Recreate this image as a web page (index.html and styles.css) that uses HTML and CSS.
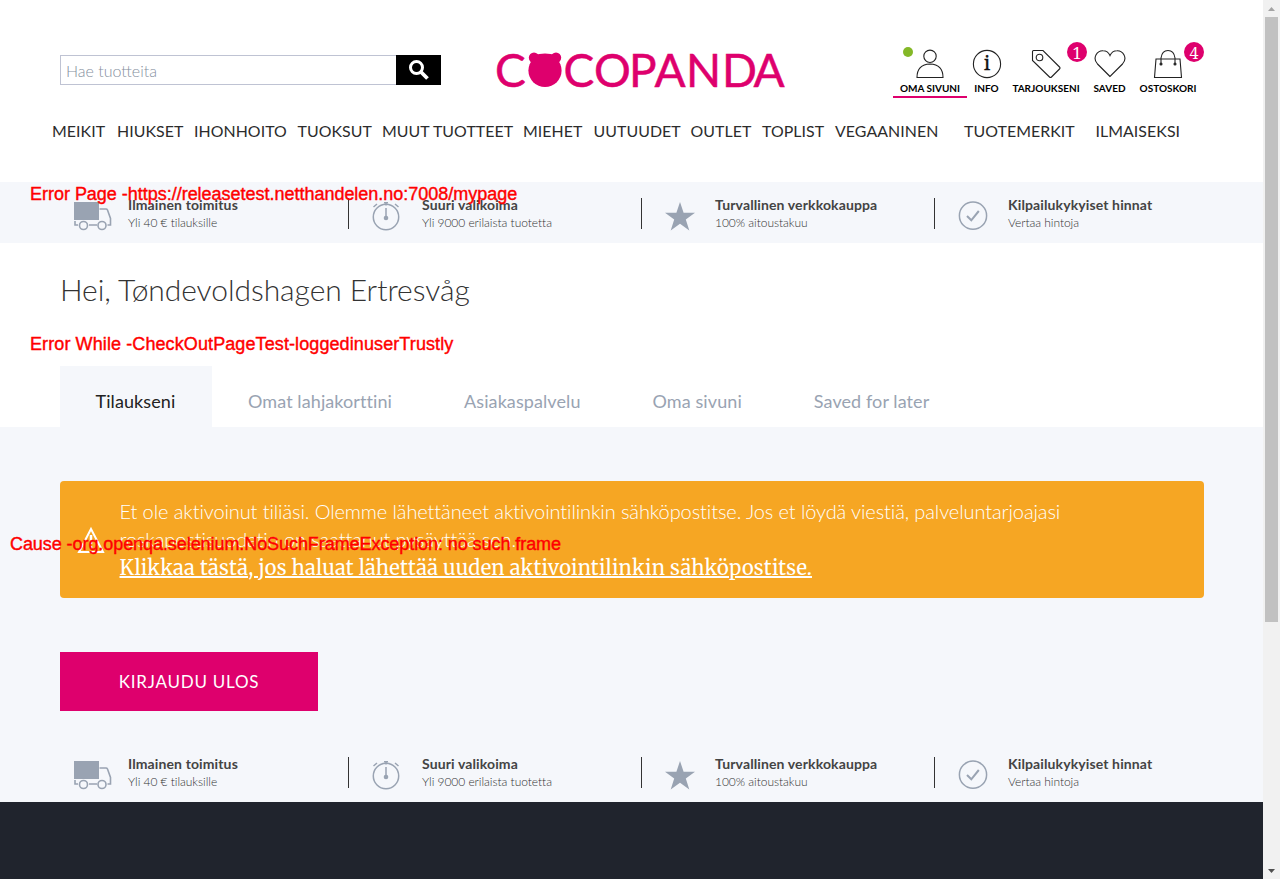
FILE: index.html
```html
<!DOCTYPE html>
<html lang="fi">
<head>
<meta charset="utf-8">
<title>Cocopanda</title>
<link rel="stylesheet" href="styles.css">
</head>
<body>
<svg class="sprite" width="0" height="0">
  <symbol id="truck" viewBox="0 0 38 30">
    <path fill="#99a3b2" d="M0 1h25v18H0z"/>
    <g fill="none" stroke="#99a3b2" stroke-width="1.6">
      <path d="M25.500 8h6.500q1 0 1.500 1l3 8.500v6.500h-3M15 24h8M4 24H1v-4"/>
      <circle cx="9.500" cy="24.500" r="4"/><circle cx="28" cy="24.500" r="4"/>
    </g>
  </symbol>
  <symbol id="clock" viewBox="0 0 28 30">
    <g fill="none" stroke="#99a3b2" stroke-width="1.5">
      <circle cx="14" cy="16" r="12.700"/><path d="M14 7v9M12 1.800h4M14 1.500v3M1.500 6l3.500-3M26.500 6l-3.500-3"/>
    </g>
    <circle cx="14" cy="17" r="2.300" fill="#99a3b2"/>
  </symbol>
  <symbol id="star" viewBox="0 0 30 30"><path fill="#99a3b2" d="M15 1l3.600 10.800H30l-9.200 6.700L24.300 29.500 15 22.700l-9.300 6.800 3.500-11L0 11.800h11.400z"/></symbol>
  <symbol id="check" viewBox="0 0 30 30"><circle cx="15" cy="14.700" r="13.600" fill="none" stroke="#99a3b2" stroke-width="1.500"/><path d="M9 15l4.300 4.300 7.500-9.300" fill="none" stroke="#99a3b2" stroke-width="2"/></symbol>
</svg>
<div class="window">
  <div class="page">
    <header class="header">
      <div class="topbar">
        <form class="search">
          <input class="search-input" placeholder="Hae tuotteita">
          <button class="search-button" type="button" aria-label="Hae"><svg width="22" height="22" viewBox="0 0 22 22" fill="none" stroke="#fff"><circle cx="8.500" cy="8.500" r="6" stroke-width="3"/><path d="M13 13l6.500 6.500" stroke-width="3.800"/></svg></button>
        </form>
        <svg class="logo" width="290" height="40" viewBox="0 0 290 40">
          <text class="logo-text" y="35.700" x="-1 67.500 98 133 158.500 190 226 257.500">CCOPANDA</text>
          <g fill="#de006d"><ellipse cx="49" cy="19.500" rx="16.600" ry="16.500"/><circle cx="38" cy="6.800" r="5.200"/><circle cx="60" cy="6.800" r="5.200"/><path d="M38 4q11-3 22 0l4 12H34z"/></g>
        </svg>
        <div class="shortcuts">
          <a class="shortcut shortcut-active"><svg width="30" height="30" viewBox="0 0 30 30"><circle cx="15" cy="7.300" r="6.200"/><path d="M2 28.500q0-13 13-13.500 13 .5 13 13.500z"/></svg><span>OMA SIVUNI</span><i class="online"></i></a>
          <a class="shortcut s-info"><svg width="30" height="30" viewBox="0 0 30 30"><circle cx="15" cy="15" r="13.600"/><text class="info-glyph" x="15" y="21" text-anchor="middle">i</text></svg><span>INFO</span></a>
          <a class="shortcut s-offers"><svg width="30" height="30" viewBox="0 0 30 30"><path d="M1.500 2.500q0-1 1-1h9.500l16.500 16.500q1 1 0 2l-8 8q-1 1-2 0L1.500 11.500z"/><circle cx="8.500" cy="8.500" r="3.300"/></svg><span>TARJOUKSENI</span><b class="badge">1</b></a>
          <a class="shortcut s-saved"><svg width="32" height="30" viewBox="0 0 32 30"><path d="M16 27.500L3.500 15C-2 9 3 1.500 9 1.700c4 0 6 2.500 7 4.800 1-2.300 3-4.800 7-4.800 6-.2 11 7.300 5.500 13.300z"/></svg><span>SAVED</span></a>
          <a class="shortcut s-cart"><svg width="30" height="30" viewBox="0 0 30 30"><path d="M3 10h24l1.500 18.500h-27zM8 14V9q1-7.500 7-7.500T22 9v5"/><circle class="solid" cx="8" cy="15" r="1"/><circle class="solid" cx="22" cy="15" r="1"/></svg><span>OSTOSKORI</span><b class="badge">4</b></a>
        </div>
      </div>
      <nav class="nav"><a>MEIKIT</a><a>HIUKSET</a><a>IHONHOITO</a><a>TUOKSUT</a><a>MUUT TUOTTEET</a><a>MIEHET</a><a>UUTUUDET</a><a>OUTLET</a><a>TOPLIST</a><a>VEGAANINEN</a><a>TUOTEMERKIT</a><a>ILMAISEKSI</a></nav>
    </header>
    <section class="usp">
      <div class="usp-item"><svg width="38" height="30"><use href="#truck"/></svg><p><strong>Ilmainen toimitus</strong><span>Yli 40 € tilauksille</span></p></div>
      <div class="usp-item"><svg width="28" height="30"><use href="#clock"/></svg><p><strong>Suuri valikoima</strong><span>Yli 9000 erilaista tuotetta</span></p></div>
      <div class="usp-item"><svg width="30" height="30"><use href="#star"/></svg><p><strong>Turvallinen verkkokauppa</strong><span>100% aitoustakuu</span></p></div>
      <div class="usp-item"><svg width="30" height="30"><use href="#check"/></svg><p><strong>Kilpailukykyiset hinnat</strong><span>Vertaa hintoja</span></p></div>
    </section>
    <h1 class="greeting">Hei, Tøndevoldshagen Ertresvåg</h1>
    <div class="tabs"><a class="tab tab-active">Tilaukseni</a><a class="tab">Omat lahjakorttini</a><a class="tab">Asiakaspalvelu</a><a class="tab">Oma sivuni</a><a class="tab">Saved for later</a></div>
    <main class="panel">
      <div class="alert">
        <svg width="28" height="28" viewBox="0 0 28 28"><path d="M14 3L26 26H2z" fill="none" stroke="#fff" stroke-width="2"/><path d="M14 9v9M14 20v3" stroke="#fff" stroke-width="2.500"/></svg>
        <div class="alert-text"><span>Et ole aktivoinut tiliäsi. Olemme lähettäneet aktivointilinkin sähköpostitse. Jos et löydä viestiä, palveluntarjoajasi</span><br><span>roskapostisuodatin on saattanut pysäyttää sen.</span><br><a class="alert-link">Klikkaa tästä, jos haluat lähettää uuden aktivointilinkin sähköpostitse.</a></div>
      </div>
      <button class="logout">KIRJAUDU ULOS</button>
      <section class="usp">
        <div class="usp-item"><svg width="38" height="30"><use href="#truck"/></svg><p><strong>Ilmainen toimitus</strong><span>Yli 40 € tilauksille</span></p></div>
        <div class="usp-item"><svg width="28" height="30"><use href="#clock"/></svg><p><strong>Suuri valikoima</strong><span>Yli 9000 erilaista tuotetta</span></p></div>
        <div class="usp-item"><svg width="30" height="30"><use href="#star"/></svg><p><strong>Turvallinen verkkokauppa</strong><span>100% aitoustakuu</span></p></div>
        <div class="usp-item"><svg width="30" height="30"><use href="#check"/></svg><p><strong>Kilpailukykyiset hinnat</strong><span>Vertaa hintoja</span></p></div>
      </section>
    </main>
    <footer class="footer"></footer>
  </div>
  <div class="scrollbar"><i class="arrow arrow-up"></i><i class="thumb"></i><i class="arrow arrow-down"></i></div>
  <div class="note note-page">Error Page -https://releasetest.netthandelen.no:7008/mypage</div>
  <div class="note note-test">Error While -CheckOutPageTest-loggedinuserTrustly</div>
  <div class="note note-cause">Cause -org.openqa.selenium.NoSuchFrameException: no such frame</div>
</div>
</body>
</html>
```
FILE: styles.css
```css
* { box-sizing: border-box; }
body { margin: 0; font-family: Lato, sans-serif; color: #333; background: #fff; font-variant-ligatures: none; }
.sprite { position: absolute; }
.window { position: relative; display: flex; width: 1280px; height: 879px; overflow: hidden; }
.page { width: 1263px; display: flex; flex-direction: column; }
.header { height: 182px; }
.topbar { display: flex; align-items: flex-start; height: 104px; padding-left: 60px; }
.search { display: flex; width: 381px; height: 30px; margin-top: 55px; }
.search-input { width: 336px; height: 30px; border: 1px solid #bfc3d3; border-right: 0; padding: 3px 5px 3px; font: 300 16px/22px Lato, sans-serif; border-radius: 0; }
.search-input::placeholder { color: #858f9e; opacity: 1; }
.search-button { width: 45px; height: 30px; border: 0; padding: 0; background: #000; display: grid; place-items: center; }
.logo { margin: 51px 0 0 55px; overflow: visible; }
.logo-text { font: 400 46px Lato, sans-serif; fill: #de006d; stroke: #de006d; stroke-width: .5px; }
.shortcuts { display: flex; margin: 49px 0 0 107px; }
.shortcut { position: relative; display: flex; flex-direction: column; align-items: center; height: 49px; font-size: 10px; font-weight: 700; line-height: 13px; color: #000; white-space: nowrap; }
.shortcut svg { fill: none; stroke: #222; stroke-width: 1.1; margin-bottom: 3px; }
.shortcut .solid { fill: #222; }
.shortcut .info-glyph { font: 400 19px "Noto Serif", "Liberation Serif", serif; fill: #111; stroke: #111; stroke-width: .4px; }
.shortcut-active { width: 74px; border-bottom: 2px solid #de006d; }
.s-info { width: 39px; }
.s-offers { width: 108px; margin-left: -14px; margin-right: -14px; }
.s-saved { width: 47px; }
.s-cart { width: 70px; }
.online { position: absolute; left: 10px; top: -2px; width: 10px; height: 10px; border-radius: 50%; background: #84b827; }
.badge { position: absolute; top: -7px; right: 13px; width: 20px; height: 20px; border-radius: 50%; background: #de006d; color: #fff; font: 400 16px/22px "Noto Serif", "Liberation Serif", serif; text-align: center; }
.s-cart .badge { right: -1px; }
.nav { display: grid; grid-template-columns: 65px 77px 103.500px 84.500px 141px 70.500px 97px 71.500px 73px 129px 131.500px 90px; padding: 16px 0 0 52px; font-size: 15.900px; line-height: 21px; letter-spacing: .06px; white-space: nowrap; color: #2c2c2c; }
.usp { height: 61px; padding-left: 55px; background: #f5f7fb; display: grid; grid-template-columns: 294px 293px 293px 293px; align-items: start; padding-top: 16px; }
.usp-item { display: flex; height: 31px; padding-left: 23px; border-right: 1px solid #333; }
.usp-item:first-child { padding-left: 19px; padding-right: 1px; }
.usp-item:last-child { border-right: 0; padding-right: 1px; }
.usp-item svg { flex: none; margin-top: 3px; }
.usp-item p { margin: -2px 0 0 auto; flex: none; width: 219px; white-space: nowrap; display: flex; flex-direction: column; }
.usp-item strong { font-size: 14px; line-height: 18px; color: #444; letter-spacing: .12px; }
.usp-item span { font-size: 12px; font-weight: 300; line-height: 18px; letter-spacing: -.04px; }
.greeting { margin: 0; height: 123px; padding: 27px 60px 0; font-weight: 300; font-size: 30px; line-height: 38px; letter-spacing: -.05px; }
.tabs { display: flex; height: 61px; padding-left: 60px; }
.tab { padding: 24px 36px 0; font-size: 18px; line-height: 23px; color: #99a3b2; white-space: nowrap; letter-spacing: .09px; }
.tab-active { background: #f5f7fb; color: #222; width: 152px; padding-left: 35.500px; }
.panel { height: 375px; background: #f5f7fb; padding-top: 54px; }
.alert { width: 1144px; height: 117px; margin-left: 60px; padding: 17px 17px; background: #f6a623; border-radius: 4px; display: flex; gap: 14.500px; align-items: center; color: #fff; }
.alert-text { font-size: 20px; font-weight: 300; line-height: 28px; white-space: nowrap; letter-spacing: -.1px; }
.alert-link { font-family: Merriweather, "Noto Serif", "Liberation Serif", serif; text-decoration: underline; font-weight: 400; letter-spacing: .19px; }
.logout { display: block; width: 258px; height: 59px; margin: 54px 0 30px 60px; padding: 0; border: 0; background: #de006d; color: #fff; font: 400 17px Lato, sans-serif; letter-spacing: .76px; }
.footer { height: 77px; background: #20242d; }
.scrollbar { width: 17px; background: #f1f1f1; display: flex; flex-direction: column; align-items: center; }
.thumb { width: 13px; height: 605px; background: #c1c1c1; }
.arrow { height: 17px; width: 17px; }
.arrow::before { content: ""; display: block; margin: 7px auto 0; width: 7px; height: 4px; background: #a3a3a3; clip-path: polygon(50% 0, 100% 100%, 0 100%); }
.arrow-down { margin-top: auto; }
.arrow-down::before { background: #505050; clip-path: polygon(0 0, 100% 0, 50% 100%); }
.note { position: absolute; font: 18px/22px "Liberation Sans", sans-serif; color: #f00; -webkit-text-stroke: .4px #f00; white-space: nowrap; }
.note-page { left: 30px; top: 183px; letter-spacing: -.02px; }
.note-test { left: 30px; top: 333px; letter-spacing: .1px; }
.note-cause { left: 10px; top: 533px; letter-spacing: -.07px; }
```
